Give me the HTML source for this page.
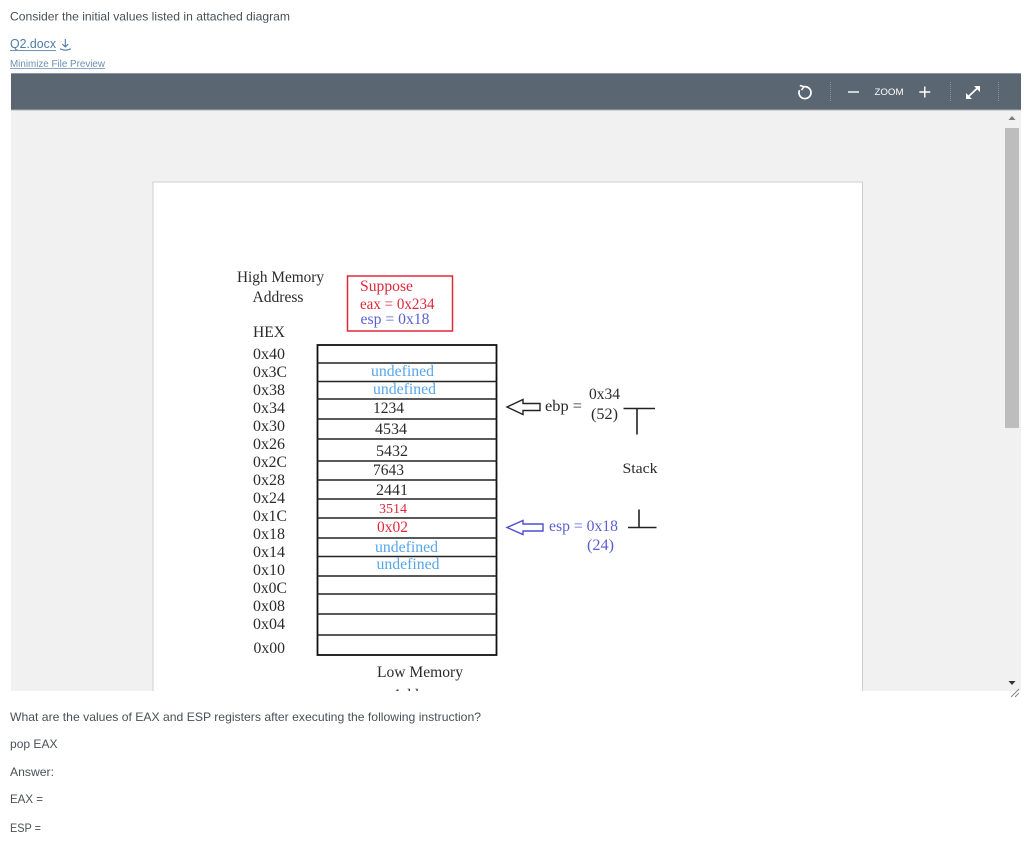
<!DOCTYPE html>
<html lang="en">
<head>
<meta charset="utf-8">
<title>Question</title>
<style>
html,body{margin:0;padding:0;background:#fff;width:1024px;height:853px;overflow:hidden}
svg{display:block;filter:blur(.35px)}
.s{font-family:"Liberation Sans",sans-serif;font-size:12px;fill:#4a5055}
.t{font-family:"Liberation Serif",serif;font-size:15.5px;fill:#2b2b2b}
.u{fill:#58a6ea}.r{fill:#e0283c}.b{fill:#5a5fd0}
</style>
</head>
<body>
<svg width="1024" height="853" viewBox="0 0 1024 853" xmlns="http://www.w3.org/2000/svg">
<defs><clipPath id="c"><rect x="11" y="110" width="1010" height="581"/></clipPath></defs>

<text class="s" x="10" y="20.5" textLength="280" lengthAdjust="spacingAndGlyphs">Consider the initial values listed in attached diagram</text>
<text class="s" x="10" y="48" textLength="46" lengthAdjust="spacingAndGlyphs" style="fill:#4f7ba6;font-size:12.5px">Q2.docx</text>
<rect x="10" y="50" width="46" height="1" fill="#6e93b8"/>
<path d="M65.300 39V47M62.300 44L65.300 47L68.300 44M60 48.800Q65.300 51.500 71 48.800" fill="none" stroke="#4f7ba6" stroke-width="1.100"/>
<text class="s" x="10" y="67" textLength="95" lengthAdjust="spacingAndGlyphs" style="fill:#6d8fb0;font-size:10px">Minimize File Preview</text>
<rect x="10" y="68" width="95" height="1" fill="#8aa8c4"/>

<rect x="11" y="110" width="1010" height="581" fill="#f1f1f1"/>
<rect x="11" y="73" width="1010" height="37" fill="#5a6672"/>
<rect x="11" y="73" width="1010" height="1" fill="#8b949c"/>
<rect x="11" y="109.500" width="1010" height="1" fill="#aeb4b9"/>

<path d="M804 86.700A6 6 0 1 1 799.500 90.200" fill="none" stroke="#fff" stroke-width="1.700"/>
<path d="M799.800 85.500L804 86.700L801.500 90" fill="none" stroke="#fff" stroke-width="1.500"/>
<path d="M830.500 82V101M950.500 82V101M998.500 82V101" stroke="#87919a" stroke-width="1" stroke-dasharray="1 1"/>
<path d="M848 92H859" stroke="#fff" stroke-width="1.400"/>
<text x="874.500" y="95" textLength="29" lengthAdjust="spacingAndGlyphs" style="font-family:'Liberation Sans',sans-serif;font-size:9.500px;fill:#fff">ZOOM</text>
<path d="M919.300 92H930.300M924.800 86.500V97.500" stroke="#fff" stroke-width="1.400"/>
<path d="M968.500 96.500L977.500 88" fill="none" stroke="#fff" stroke-width="1.700"/>
<path d="M974 86H980V92ZM966 93V99H972Z" fill="#fff"/>

<rect x="1005" y="128" width="14" height="300" fill="#bdbdbd"/>
<path d="M1008.500 120L1012 116L1015.500 120Z" fill="#7d7d7d"/>
<path d="M1008.500 681H1015.500L1012 685Z" fill="#333"/>
<path d="M1011 697L1019 689M1015 697L1019 693" stroke="#888" stroke-width="1"/>

<g clip-path="url(#c)">
<rect x="153" y="182" width="709.500" height="520" fill="#fff" stroke="#cfcfcf"/>

<text class="t" x="237" y="282" textLength="87" lengthAdjust="spacingAndGlyphs">High Memory</text>
<text class="t" x="252.500" y="302" textLength="51" lengthAdjust="spacingAndGlyphs">Address</text>
<text class="t" x="253" y="337" textLength="32" lengthAdjust="spacingAndGlyphs">HEX</text>

<rect x="347.500" y="276" width="105" height="55" fill="#fff" stroke="#e0283c" stroke-width="1.500"/>
<text class="t r" x="360" y="291" textLength="53" lengthAdjust="spacingAndGlyphs">Suppose</text>
<text class="t r" x="360" y="309" textLength="74.500" lengthAdjust="spacingAndGlyphs">eax = 0x234</text>
<text class="t b" x="360.500" y="324" textLength="69" lengthAdjust="spacingAndGlyphs">esp = 0x18</text>

<g>
<text class="t" x="253" y="359" textLength="32" lengthAdjust="spacingAndGlyphs">0x40</text>
<text class="t" x="253" y="377" textLength="34" lengthAdjust="spacingAndGlyphs">0x3C</text>
<text class="t" x="253" y="395" textLength="32" lengthAdjust="spacingAndGlyphs">0x38</text>
<text class="t" x="253" y="413" textLength="32" lengthAdjust="spacingAndGlyphs">0x34</text>
<text class="t" x="253" y="431" textLength="32" lengthAdjust="spacingAndGlyphs">0x30</text>
<text class="t" x="253" y="449" textLength="32" lengthAdjust="spacingAndGlyphs">0x26</text>
<text class="t" x="253" y="467" textLength="34" lengthAdjust="spacingAndGlyphs">0x2C</text>
<text class="t" x="253" y="485" textLength="32" lengthAdjust="spacingAndGlyphs">0x28</text>
<text class="t" x="253" y="503" textLength="32" lengthAdjust="spacingAndGlyphs">0x24</text>
<text class="t" x="253" y="521" textLength="34" lengthAdjust="spacingAndGlyphs">0x1C</text>
<text class="t" x="253" y="539" textLength="32" lengthAdjust="spacingAndGlyphs">0x18</text>
<text class="t" x="253" y="557" textLength="32" lengthAdjust="spacingAndGlyphs">0x14</text>
<text class="t" x="253" y="575" textLength="32" lengthAdjust="spacingAndGlyphs">0x10</text>
<text class="t" x="253" y="593" textLength="34" lengthAdjust="spacingAndGlyphs">0x0C</text>
<text class="t" x="253" y="611" textLength="32" lengthAdjust="spacingAndGlyphs">0x08</text>
<text class="t" x="253" y="629" textLength="32" lengthAdjust="spacingAndGlyphs">0x04</text>
<text class="t" x="253.500" y="653" textLength="31.500" lengthAdjust="spacingAndGlyphs">0x00</text>
</g>

<rect x="317.500" y="345" width="179" height="310" fill="#fff" stroke="#111" stroke-width="1.800"/>
<path d="M317 363H497M317 381.500H497M317 399H497M317 419H497M317 439H497M317 461H497M317 480H497M317 499H497M317 518H497M317 538H497M317 556.500H497M317 576H497M317 594H497M317 614H497M317 635H497" stroke="#222" stroke-width="1.500"/>

<text class="t u" x="371" y="376" textLength="63" lengthAdjust="spacingAndGlyphs">undefined</text>
<text class="t u" x="373" y="394" textLength="63" lengthAdjust="spacingAndGlyphs">undefined</text>
<text class="t" x="373" y="413" textLength="31" lengthAdjust="spacingAndGlyphs">1234</text>
<text class="t" x="375" y="434" textLength="32" lengthAdjust="spacingAndGlyphs">4534</text>
<text class="t" x="376" y="456" textLength="32" lengthAdjust="spacingAndGlyphs">5432</text>
<text class="t" x="373" y="475" textLength="31" lengthAdjust="spacingAndGlyphs">7643</text>
<text class="t" x="376" y="495" textLength="32" lengthAdjust="spacingAndGlyphs">2441</text>
<text class="t r" x="379" y="513" textLength="28" lengthAdjust="spacingAndGlyphs" style="font-size:14px">3514</text>
<text class="t r" x="377" y="532" textLength="31" lengthAdjust="spacingAndGlyphs">0x02</text>
<text class="t u" x="375" y="552" textLength="63" lengthAdjust="spacingAndGlyphs">undefined</text>
<text class="t u" x="376.500" y="569" textLength="63" lengthAdjust="spacingAndGlyphs">undefined</text>

<path d="M507 407L523 399.500V403.500H540V410.500H523V414.500Z" fill="#fff" stroke="#222" stroke-width="1.400"/>
<text class="t" x="545" y="411" textLength="37" lengthAdjust="spacingAndGlyphs">ebp =</text>
<text class="t" x="589" y="399" textLength="31" lengthAdjust="spacingAndGlyphs">0x34</text>
<text class="t" x="591" y="419" textLength="27" lengthAdjust="spacingAndGlyphs">(52)</text>
<path d="M623.500 408.500H655M637 408.500V434.500" fill="none" stroke="#222" stroke-width="1.600"/>
<text class="t" x="622.500" y="473" textLength="35" lengthAdjust="spacingAndGlyphs" style="font-size:14.500px">Stack</text>
<path d="M628 527.500H656.500M639 509.500V527.500" fill="none" stroke="#222" stroke-width="1.600"/>
<path d="M507 527.500L523 520.500V524H543V531H523V534.500Z" fill="#fff" stroke="#4a4fd0" stroke-width="1.400"/>
<text class="t b" x="549" y="531" textLength="69" lengthAdjust="spacingAndGlyphs">esp = 0x18</text>
<text class="t b" x="587" y="550" textLength="27" lengthAdjust="spacingAndGlyphs">(24)</text>

<text class="t" x="377" y="677" textLength="86" lengthAdjust="spacingAndGlyphs">Low Memory</text>
<text class="t" x="392" y="700" textLength="51" lengthAdjust="spacingAndGlyphs">Address</text>
</g>

<text class="s" x="10" y="721" textLength="471" lengthAdjust="spacingAndGlyphs">What are the values of EAX and ESP registers after executing the following instruction?</text>
<text class="s" x="10" y="748" textLength="47.500" lengthAdjust="spacingAndGlyphs">pop EAX</text>
<text class="s" x="10" y="776" textLength="44" lengthAdjust="spacingAndGlyphs">Answer:</text>
<text class="s" x="10" y="803" textLength="33" lengthAdjust="spacingAndGlyphs">EAX =</text>
<text class="s" x="10" y="832" textLength="31" lengthAdjust="spacingAndGlyphs">ESP =</text>
</svg>
</body>
</html>
